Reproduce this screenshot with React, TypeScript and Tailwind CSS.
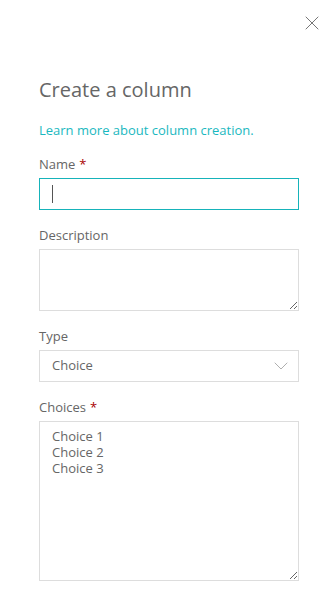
import { X, ChevronDown } from 'lucide-react'

const font = { fontFamily: '"Segoe UI", "Open Sans", "Noto Sans", sans-serif' }

function Label({ text, required }: { text: string; required?: boolean }) {
  return (
    <div className="text-[13px] leading-[20px] text-[#666666] mb-[4px]">
      {text}
      {required && <span className="text-[#a80000] ml-[4px]">*</span>}
    </div>
  )
}

export default function App() {
  return (
    <div style={font} className="relative w-[331px] h-[592px] bg-white overflow-hidden">
      <button className="absolute top-[11px] right-[7px] text-[#666666]">
        <X className="w-[24px] h-[24px]" strokeWidth={0.9} />
      </button>

      <div className="pl-[39px] pr-[32px] pt-[76px] flex flex-col">
        <h1 className="text-[20px] leading-[28px] font-normal text-[#666666]">Create a column</h1>
        <a className="mt-[16px] text-[13px] leading-[20px] text-[#1ab8c0]">
          Learn more about column creation.
        </a>

        <div className="mt-[14px]">
          <Label text="Name" required />
          <div className="h-[32px] border border-[#16b3ba] flex items-center px-[12px]">
            <span className="w-px h-[18px] bg-[#555555]" />
          </div>
        </div>

        <div className="mt-[15px]">
          <Label text="Description" />
          <textarea className="block w-full h-[62px] border border-[#dddddd] outline-none px-[12px] py-[6px] text-[13px] text-[#666666]" />
        </div>

        <div className="mt-[15px]">
          <Label text="Type" />
          <div className="h-[32px] border border-[#dddddd] flex items-center justify-between pl-[12px] pr-[5px] text-[13px] text-[#666666]">
            <span>Choice</span>
            <ChevronDown className="w-[24px] h-[24px] text-[#a6a6a6]" strokeWidth={0.9} />
          </div>
        </div>

        <div className="mt-[15px]">
          <Label text="Choices" required />
          <textarea
            defaultValue={'Choice 1\nChoice 2\nChoice 3'}
            className="block w-full h-[160px] border border-[#dddddd] outline-none px-[12px] pt-[6px] text-[13px] leading-[16px] text-[#666666]"
          />
        </div>
      </div>
    </div>
  )
}
